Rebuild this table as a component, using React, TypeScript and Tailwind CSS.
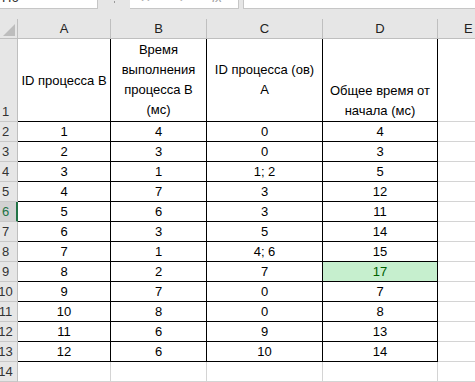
import React from 'react'

// Spreadsheet view: formula bar strip, column/row headers and a bordered table.

type Row = [string, string, string, string]

const rows: Row[] = [
  ['1', '4', '0', '4'],
  ['2', '3', '0', '3'],
  ['3', '1', '1; 2', '5'],
  ['4', '7', '3', '12'],
  ['5', '6', '3', '11'],
  ['6', '3', '5', '14'],
  ['7', '1', '4; 6', '15'],
  ['8', '2', '7', '17'],
  ['9', '7', '0', '7'],
  ['10', '8', '0', '8'],
  ['11', '6', '9', '13'],
  ['12', '6', '10', '14'],
]

const headBox = 'bg-[#e6e6e6] border-[#bfbfbf]'
const cellBase = 'flex items-center justify-center border-r border-b border-black'
const dataCell = `${cellBase} bg-white text-black`
const goodCell = `${cellBase} bg-[#c6efce] text-[#006100]`

function RowHead({ n, active }: { n: number; active?: boolean }) {
  return (
    <div
      className={
        active
          ? 'relative border-b border-r-2 border-b-[#c8c8c8] border-r-[#217346] bg-[#d2d2d2] text-[#217346]'
          : 'relative border-b border-r border-b-[#c8c8c8] border-r-[#bfbfbf] bg-[#e6e6e6] text-[#333]'
      }
    >
      <span className="absolute bottom-0 left-0 flex h-[19px] w-[11px] items-center justify-center whitespace-nowrap">
        {n}
      </span>
    </div>
  )
}

export default function App() {
  return (
    <div className="h-[382px] w-[475px] overflow-hidden bg-white font-['Liberation_Sans',Arial,sans-serif] text-[13px] leading-[19px]">
      {/* formula bar, cut at the top */}
      <div className="flex h-[19px] items-start bg-[#e6e6e6]">
        <div className="relative h-[9px] w-[98px] overflow-hidden border-b border-r border-[#c6c6c6] bg-white">
          <span className="absolute left-[2px] top-[-12px] text-[#333]">H6</span>
        </div>
        <div className="flex w-[32px] justify-center">
          <span className="mt-[1px] h-[2px] w-[1px] bg-[#9a9a9a]" />
        </div>
        <div className="relative h-[9px] w-[109px] overflow-hidden border-b border-r border-[#c6c6c6] bg-white text-[#a0a0a0]">
          <span className="absolute left-[10px] top-[-12px]">✕</span>
          <span className="absolute left-[48px] top-[-12px]">✓</span>
          <span className="absolute left-[82px] top-[-12px] italic">fx</span>
        </div>
        <div className="ml-[4px] h-[9px] flex-1 border-b border-l border-[#c6c6c6] bg-white" />
      </div>

      <div className="grid grid-cols-[18px_93px_96px_116px_115px_1fr] grid-rows-[20px_83px_repeat(13,20px)]">
        {/* corner */}
        <div className={`relative border-b border-r ${headBox}`}>
          <svg className="absolute bottom-[2px] right-[2px]" width="12" height="12" viewBox="0 0 12 12">
            <polygon points="12,0 12,12 0,12" fill="#bdbdbd" />
          </svg>
        </div>
        {['A', 'B', 'C', 'D'].map((c) => (
          <div key={c} className={`flex items-center justify-center border-b border-r text-[#222] ${headBox}`}>
            {c}
          </div>
        ))}
        <div className={`flex items-center justify-start border-b pl-[26px] text-[#222] ${headBox}`}>E</div>

        {/* header row */}
        <RowHead n={1} />
        <div className={dataCell}>ID процесса B</div>
        <div className={`${dataCell} text-center leading-[20px]`}>
          Время
          <br />
          выполнения
          <br />
          процесса B
          <br />
          (мс)
        </div>
        <div className={`${dataCell} text-center leading-[20px]`}>
          ID процесса (ов)
          <br />
          A
        </div>
        <div className={`${dataCell} items-end text-center leading-[20px]`}>
          <span>
            Общее время от
            <br />
            начала (мс)
          </span>
        </div>
        <div className="border-b border-[#d4d4d4]" />

        {rows.map((r, i) => {
          const n = i + 2
          return (
            <React.Fragment key={n}>
              <RowHead n={n} active={n === 6} />
              <div className={dataCell}>{r[0]}</div>
              <div className={dataCell}>{r[1]}</div>
              <div className={dataCell}>{r[2]}</div>
              <div className={n === 9 ? goodCell : dataCell}>{r[3]}</div>
              <div className="border-b border-[#d4d4d4]" />
            </React.Fragment>
          )
        })}

        {/* empty row 14 */}
        <RowHead n={14} />
        <div className="border-b border-r border-[#d4d4d4]" />
        <div className="border-b border-r border-[#d4d4d4]" />
        <div className="border-b border-r border-[#d4d4d4]" />
        <div className="border-b border-r border-[#d4d4d4]" />
        <div className="border-b border-[#d4d4d4]" />
      </div>
    </div>
  )
}
